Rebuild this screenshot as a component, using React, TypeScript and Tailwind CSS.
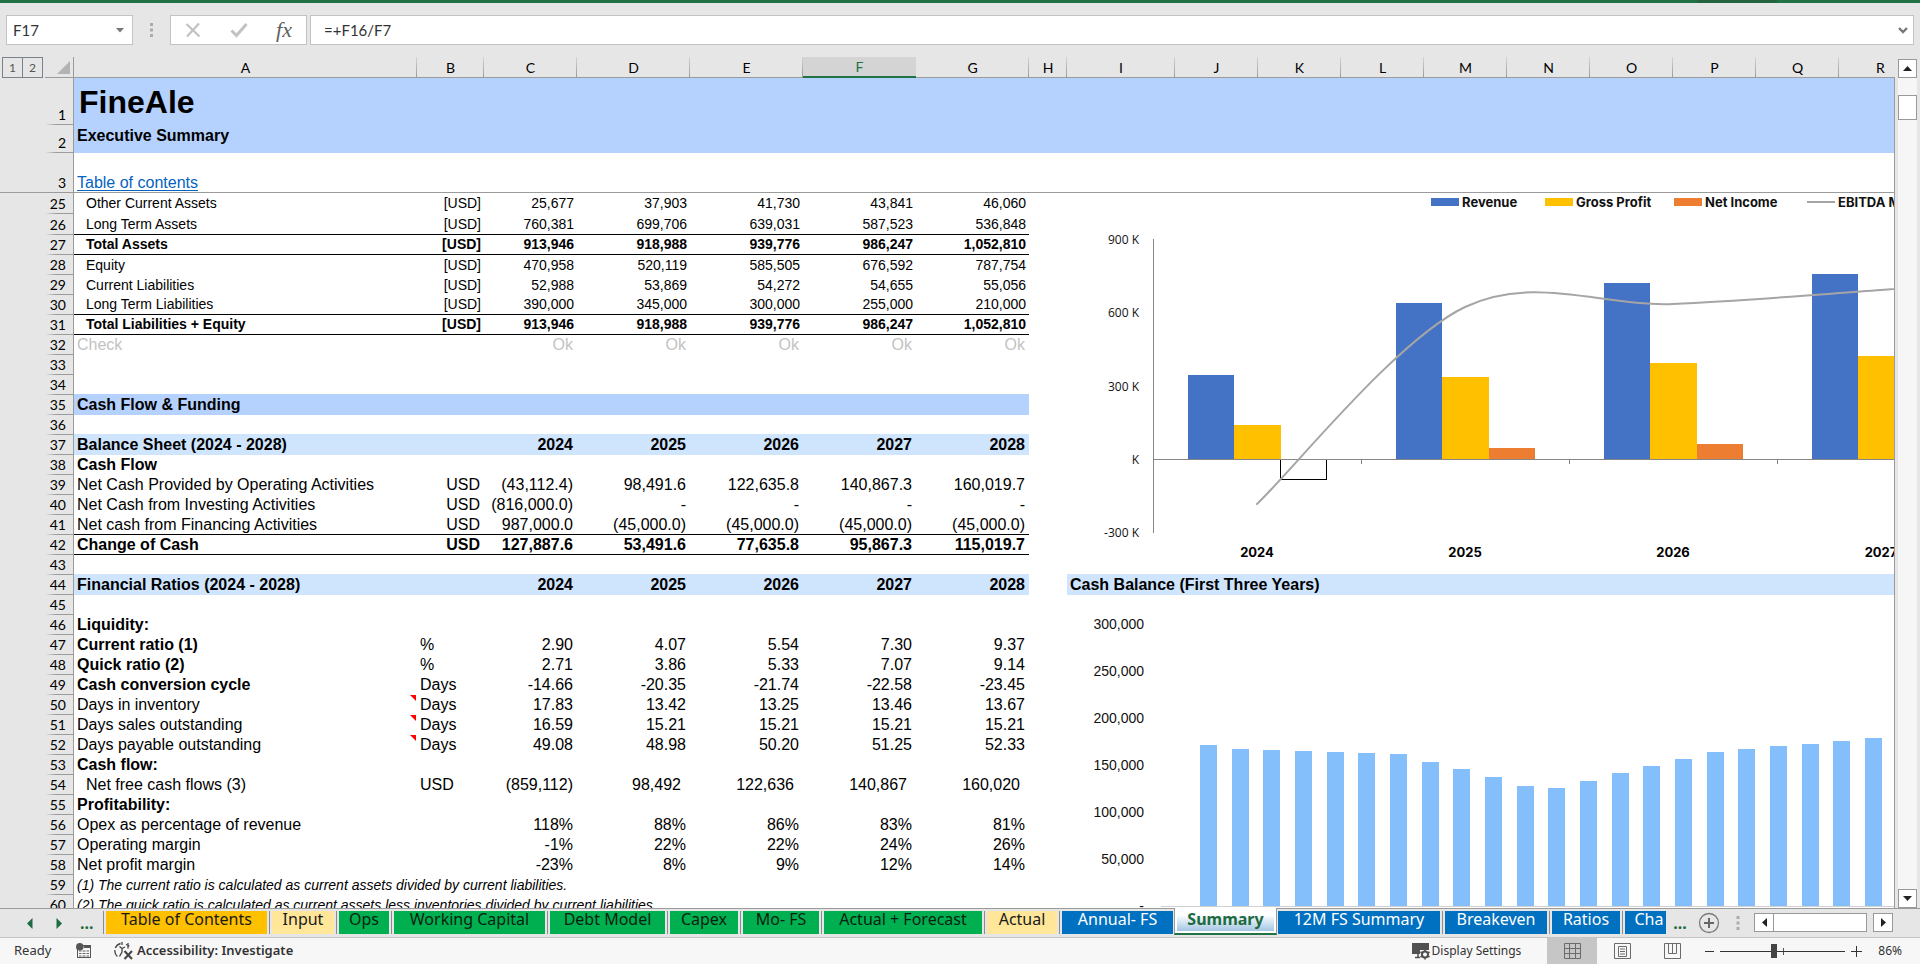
import React from "react";
import { clsx } from "clsx";

type Tone = "small" | "total" | "body" | "strong" | "muted" | "note";

interface Row {
  n: number;
  label?: string;
  unit?: string;
  unitLeft?: boolean;
  values?: string[];
  tone?: Tone;
  boldLabel?: boolean;
  indent?: boolean;
  line?: boolean;
  tall?: boolean;
  band?: "blue" | "light";
  note?: boolean;
  side?: string;
  accounting?: boolean;
}

const YEARS = ["2024", "2025", "2026", "2027", "2028"];

const ROWS: Row[] = [
  { n: 25, label: "Other Current Assets", unit: "[USD]", tone: "small", indent: true, tall: true, values: ["25,677", "37,903", "41,730", "43,841", "46,060"] },
  { n: 26, label: "Long Term Assets", unit: "[USD]", tone: "small", indent: true, tall: true, line: true, values: ["760,381", "699,706", "639,031", "587,523", "536,848"] },
  { n: 27, label: "Total Assets", unit: "[USD]", tone: "total", indent: true, line: true, values: ["913,946", "918,988", "939,776", "986,247", "1,052,810"] },
  { n: 28, label: "Equity", unit: "[USD]", tone: "small", indent: true, values: ["470,958", "520,119", "585,505", "676,592", "787,754"] },
  { n: 29, label: "Current Liabilities", unit: "[USD]", tone: "small", indent: true, values: ["52,988", "53,869", "54,272", "54,655", "55,056"] },
  { n: 30, label: "Long Term Liabilities", unit: "[USD]", tone: "small", indent: true, line: true, values: ["390,000", "345,000", "300,000", "255,000", "210,000"] },
  { n: 31, label: "Total Liabilities + Equity", unit: "[USD]", tone: "total", indent: true, line: true, values: ["913,946", "918,988", "939,776", "986,247", "1,052,810"] },
  { n: 32, label: "Check", tone: "muted", values: ["Ok", "Ok", "Ok", "Ok", "Ok"] },
  { n: 33 },
  { n: 34 },
  { n: 35, label: "Cash Flow & Funding", tone: "strong", band: "blue" },
  { n: 36 },
  { n: 37, label: "Balance Sheet (2024 - 2028)", tone: "strong", band: "light", values: YEARS },
  { n: 38, label: "Cash Flow", tone: "strong" },
  { n: 39, label: "Net Cash Provided by Operating Activities", unit: "USD", values: ["(43,112.4)", "98,491.6", "122,635.8", "140,867.3", "160,019.7"] },
  { n: 40, label: "Net Cash from Investing Activities", unit: "USD", values: ["(816,000.0)", "-", "-", "-", "-"] },
  { n: 41, label: "Net cash from Financing Activities", unit: "USD", line: true, values: ["987,000.0", "(45,000.0)", "(45,000.0)", "(45,000.0)", "(45,000.0)"] },
  { n: 42, label: "Change of Cash", unit: "USD", tone: "strong", line: true, values: ["127,887.6", "53,491.6", "77,635.8", "95,867.3", "115,019.7"] },
  { n: 43 },
  { n: 44, label: "Financial Ratios (2024 - 2028)", tone: "strong", band: "light", values: YEARS, side: "Cash Balance (First Three Years)" },
  { n: 45 },
  { n: 46, label: "Liquidity:", tone: "strong" },
  { n: 47, label: "Current ratio (1)", boldLabel: true, unit: "%", unitLeft: true, values: ["2.90", "4.07", "5.54", "7.30", "9.37"] },
  { n: 48, label: "Quick ratio (2)", boldLabel: true, unit: "%", unitLeft: true, values: ["2.71", "3.86", "5.33", "7.07", "9.14"] },
  { n: 49, label: "Cash conversion cycle", boldLabel: true, unit: "Days", unitLeft: true, values: ["-14.66", "-20.35", "-21.74", "-22.58", "-23.45"] },
  { n: 50, label: "Days in inventory", unit: "Days", unitLeft: true, note: true, values: ["17.83", "13.42", "13.25", "13.46", "13.67"] },
  { n: 51, label: "Days sales outstanding", unit: "Days", unitLeft: true, note: true, values: ["16.59", "15.21", "15.21", "15.21", "15.21"] },
  { n: 52, label: "Days payable outstanding", unit: "Days", unitLeft: true, note: true, values: ["49.08", "48.98", "50.20", "51.25", "52.33"] },
  { n: 53, label: "Cash flow:", tone: "strong" },
  { n: 54, label: "Net free cash flows (3)", indent: true, unit: "USD", unitLeft: true, accounting: true, values: ["(859,112)", "98,492", "122,636", "140,867", "160,020"] },
  { n: 55, label: "Profitability:", tone: "strong" },
  { n: 56, label: "Opex as percentage of revenue", values: ["118%", "88%", "86%", "83%", "81%"] },
  { n: 57, label: "Operating margin", values: ["-1%", "22%", "22%", "24%", "26%"] },
  { n: 58, label: "Net profit margin", values: ["-23%", "8%", "9%", "12%", "14%"] },
  { n: 59, label: "(1) The current ratio is calculated as current assets divided by current liabilities.", tone: "note" },
  { n: 60, label: "(2) The quick ratio is calculated as current assets less inventories divided by current liabilities.", tone: "note" },
];

const COLUMNS = "ABCDEFGHIJKLMNOPQR".split("");

const TONES: Record<Tone, string> = {
  small: "text-[14px]",
  total: "text-[14px] font-bold",
  body: "text-[16px]",
  strong: "text-[16px] font-bold",
  muted: "text-[16px] text-[#c3c3c3]",
  note: "text-[14px] italic",
};

const BANDS = {
  blue: "bg-[#b5d2ff] shadow-[0_-1px_0_#b5d2ff]",
  light: "bg-[#cfe5fe] shadow-[0_-1px_0_#cfe5fe]",
};

function RowHead({ n, freeze }: { n: number; freeze?: boolean }) {
  return (
    <>
      <td className={clsx("bg-[#e6e6e6]", freeze && "border-b border-[#9b9b9b]")} />
      <th
        scope="row"
        className={clsx(
          "border-r border-[#9b9b9b] bg-[#e6e6e6] pr-[7px] text-right align-bottom font-['Lato',sans-serif] text-[14px] leading-[19px] font-normal",
          freeze
            ? "border-b"
            : "bg-[linear-gradient(to_right,#e6e6e6,#9b9b9b_40%)] bg-[length:100%_1px] bg-bottom bg-no-repeat pb-px",
        )}
      >
        {n}
      </th>
    </>
  );
}

function DataRow({ row }: { row: Row }) {
  const tone = row.tone ?? "body";
  const compact = tone === "small" || tone === "total";
  const cell = clsx(
    TONES[tone],
    "align-bottom leading-[19px] whitespace-nowrap",
    row.line && "border-b border-black",
    !row.line && tone !== "note" && (!compact || row.tall) && "pb-px",
    row.band && BANDS[row.band],
  );
  const right = compact ? "pr-[3px] text-right" : "pr-[4px] text-right";
  return (
    <tr className={row.tall ? "h-[21px]" : "h-5"}>
      <RowHead n={row.n} />
      <td
        className={clsx(cell, "relative", row.indent ? "pl-[12px]" : "pl-[3px]", row.boldLabel && "font-bold")}
      >
        {row.label}
        {row.note && (
          <svg className="absolute top-0 right-px h-[6px] w-[6px]" viewBox="0 0 6 6" aria-hidden="true">
            <path d="M0 0H6V6Z" fill="#ff0000" />
          </svg>
        )}
      </td>
      <td className={clsx(cell, row.unitLeft ? "pl-[3px]" : right)}>{row.unit}</td>
      {YEARS.map((year, i) => (
        <td key={year} className={clsx(cell, row.accounting && i > 0 ? "pr-[9px] text-right" : right)}>
          {row.values?.[i]}
        </td>
      ))}
      <td />
      {row.side ? (
        <td colSpan={10} className={clsx(cell, "pl-[3px]")}>
          {row.side}
        </td>
      ) : (
        <td colSpan={10} />
      )}
    </tr>
  );
}

function Sheet() {
  return (
    <table className="w-full min-w-[1922px] table-fixed border-separate border-spacing-0 font-['Liberation_Sans',Arial,sans-serif] text-black">
      <colgroup>
        <col className="w-[45px]" />
        <col className="w-[29px]" />
        <col className="w-[343px]" />
        <col className="w-[67px]" />
        <col className="w-[93px]" />
        <col className="w-[113px]" />
        <col className="w-[113px]" />
        <col className="w-[113px]" />
        <col className="w-[113px]" />
        <col className="w-[38px]" />
        <col className="w-[108px]" />
        <col className="w-[83px]" />
        <col className="w-[83px]" />
        <col className="w-[83px]" />
        <col className="w-[83px]" />
        <col className="w-[83px]" />
        <col className="w-[83px]" />
        <col className="w-[83px]" />
        <col className="w-[83px]" />
        <col />
      </colgroup>
      <thead>
        <tr className="h-[21px] bg-[#e6e6e6]">
          <td className="p-0 align-top">
            <div className="ml-[2px] flex">
              {["1", "2"].map((level) => (
                <button
                  key={level}
                  type="button"
                  aria-label={`Outline level ${level}`}
                  className="-mr-px h-[21px] w-[21px] border border-[#7c828b] font-['Lato',sans-serif] text-[12px] leading-[19px] text-[#555]"
                >
                  {level}
                </button>
              ))}
            </div>
          </td>
          <td className="border-r border-b border-[#9b9b9b] p-0 align-top">
            <svg className="mt-1 ml-3 h-[13px] w-[13px]" viewBox="0 0 13 13" aria-hidden="true">
              <path d="M13 0V13H0Z" fill="#b3b3b3" />
            </svg>
          </td>
          {COLUMNS.map((c) => (
            <th
              key={c}
              scope="col"
              className={clsx(
                "p-0 font-['Lato',sans-serif] text-[14px] leading-[19px] font-normal",
                c === "F"
                  ? "border-b-2 border-[#217346] bg-[#d4d4d4] text-[#217346]"
                  : "border-b border-[#9b9b9b] bg-[linear-gradient(to_bottom,#d4d4d4,#9b9b9b)] bg-[length:1px_100%] bg-right bg-no-repeat",
              )}
            >
              {c}
            </th>
          ))}
        </tr>
      </thead>
      <tbody>
        <tr className="h-[47px]">
          <RowHead n={1} />
          <td colSpan={18} className="bg-[#b5d2ff] pl-[5px] text-[32px] leading-9 font-bold">
            FineAle
          </td>
        </tr>
        <tr className="h-7">
          <RowHead n={2} />
          <td colSpan={18} className="bg-[#b5d2ff] pt-px pl-[3px] align-top text-[16px] leading-5 font-bold">
            Executive Summary
          </td>
        </tr>
        <tr className="h-10">
          <RowHead n={3} freeze />
          <td colSpan={18} className="border-b border-[#9b9b9b] pl-[3px] align-bottom text-[16px] leading-[19px]">
            <a href="#contents" className="text-[#0563c1] underline underline-offset-2">
              Table of contents
            </a>
          </td>
        </tr>
        {ROWS.map((row) => (
          <DataRow key={row.n} row={row} />
        ))}
      </tbody>
    </table>
  );
}

const PERFORMANCE = [
  { year: "2024", revenue: 346, gross: 142, net: -80 },
  { year: "2025", revenue: 643, gross: 340, net: 50 },
  { year: "2026", revenue: 725, gross: 397, net: 66 },
  { year: "2027", revenue: 762, gross: 426, net: 80 },
];

const LEGEND = [
  { name: "Revenue", x: 362, color: "#4472c4" },
  { name: "Gross Profit", x: 476, color: "#ffc000" },
  { name: "Net Income", x: 605, color: "#ed7d31" },
];

function PerformanceChart() {
  const zero = 267;
  const perK = 73.3 / 300;
  return (
    <svg
      className="absolute top-[136px] left-[1069px] h-[380px] w-[900px]"
      viewBox="0 0 900 380"
      role="img"
      aria-label="Revenue, gross profit and net income by year"
    >
      <rect width="900" height="380" fill="#fff" />
      <g className="font-['Inter',sans-serif] text-[13px] font-bold" fill="#111">
        {LEGEND.map((l) => (
          <g key={l.name}>
            <rect x={l.x} y="5" width="28" height="8" fill={l.color} />
            <text x={l.x + 31} y="14">{l.name}</text>
          </g>
        ))}
        <path d="M738 9H766" stroke="#a5a5a5" strokeWidth="2" />
        <text x="769" y="14">EBITDA Margin</text>
      </g>
      <g className="font-['Open_Sans',sans-serif] text-[12px]" textAnchor="end" fill="#111">
        {["900 K", "600 K", "300 K", "K", "-300 K"].map((t, i) => (
          <text key={t} x="70" y={51 + Math.round(i * 73.3)}>{t}</text>
        ))}
      </g>
      {PERFORMANCE.map((d, i) => {
        const x = 119 + i * 208;
        return (
          <g key={d.year}>
            <g shapeRendering="crispEdges">
              <rect x={x} y={zero - d.revenue * perK} width="46" height={d.revenue * perK} fill="#4472c4" />
              <rect x={x + 46} y={zero - d.gross * perK} width="47" height={d.gross * perK} fill="#ffc000" />
              {d.net > 0 ? (
                <rect x={x + 93} y={zero - d.net * perK} width="46" height={d.net * perK} fill="#ed7d31" />
              ) : (
                <rect x={x + 92.5} y={zero - 0.5} width="46" height={-d.net * perK} fill="#fff" stroke="#000" />
              )}
            </g>
            <text x={x + 69} y="364" textAnchor="middle" className="font-['Inter',sans-serif] text-[13px] font-bold">
              {d.year}
            </text>
          </g>
        );
      })}
      <path
        d="M84.5 46V340M84.5 266.5H900M292.5 267V271M500.5 267V271M708.5 267V271"
        stroke="#868686"
        fill="none"
      />
      <path
        d="M188 311C223 278 327 147 396 114C465 81 535 114 604 111C673 108 743 102 812 97L900 90"
        stroke="#a5a5a5"
        strokeWidth="2"
        fill="none"
        strokeLinecap="round"
      />
    </svg>
  );
}

const BALANCE_HEIGHTS = [
  161, 157, 156, 155, 154, 153, 152, 144, 137, 129, 120, 118, 125, 133, 140, 147, 154, 157, 160, 162, 165, 168,
];

function CashChart() {
  return (
    <svg
      className="absolute top-[539px] left-[1069px] h-[330px] w-[900px]"
      viewBox="0 0 900 330"
      role="img"
      aria-label="Cash balance over the first three years"
    >
      <rect width="900" height="330" fill="#fff" />
      <g className="font-['Liberation_Sans',Arial,sans-serif] text-[14px]" textAnchor="end" fill="#111">
        {["300,000", "250,000", "200,000", "150,000", "100,000", "50,000", "-"].map((t, i) => (
          <text key={t} x="75" y={33 + i * 47}>{t}</text>
        ))}
      </g>
      <g shapeRendering="crispEdges" fill="#85bffb">
        {BALANCE_HEIGHTS.map((h, i) => (
          <rect key={i} x={Math.round(131 + i * 31.67)} y={310 - h} width="17" height={h} />
        ))}
      </g>
      <path d="M92 310.5H900" stroke="#d0d0d0" />
    </svg>
  );
}

function FormulaBar() {
  return (
    <div className="flex h-[54px] shrink-0 items-start bg-[#e6e6e6] pt-3 pr-[6px] pl-[6px] font-['Lato',sans-serif] text-[#333]">
      <div className="flex h-[30px] w-[127px] items-center border border-[#c3c3c3] bg-white">
        <input
          aria-label="Name box"
          defaultValue="F17"
          className="w-0 min-w-0 flex-1 bg-transparent pl-[6px] text-[15px] outline-none"
        />
        <button type="button" aria-label="Open name list" className="flex w-6 justify-center">
          <svg className="h-[5px] w-2" viewBox="0 0 8 5"><path d="M0 0H8L4 4.5Z" fill="#777" /></svg>
        </button>
      </div>
      <svg className="mx-4 mt-2 h-[14px] w-[5px]" viewBox="0 0 5 14" aria-hidden="true">
        <path d="M1 0H4V3H1ZM1 5.500H4V8.500H1ZM1 11H4V14H1Z" fill="#ababab" />
      </svg>
      <div className="flex h-[30px] w-[137px] items-center justify-between border border-[#c3c3c3] bg-white px-[14px]">
        <button type="button" aria-label="Cancel">
          <svg className="h-4 w-4" viewBox="0 0 16 16"><path d="M1.500 2L14.500 14.500M14 1.500L2 14.500" stroke="#c2c2c2" strokeWidth="2.200" fill="none" /></svg>
        </button>
        <button type="button" aria-label="Enter">
          <svg className="h-4 w-[18px]" viewBox="0 0 18 16"><path d="M1.500 8.500L6.500 13.500L16.500 2" stroke="#c2c2c2" strokeWidth="3" fill="none" /></svg>
        </button>
        <button
          type="button"
          aria-label="Insert function"
          className="font-['Liberation_Serif',serif] text-[22px] leading-6 text-[#5f5f5f] italic"
        >
          fx
        </button>
      </div>
      <div className="ml-[3px] flex h-[30px] flex-1 items-center border border-[#c3c3c3] bg-white">
        <input
          aria-label="Formula"
          defaultValue="=+F16/F7"
          className="min-w-0 flex-1 bg-transparent pl-[13px] text-[15px] outline-none"
        />
        <button type="button" aria-label="Expand formula bar" className="flex w-5 justify-center">
          <svg className="h-[7px] w-[10px]" viewBox="0 0 10 7"><path d="M1 1L5 5L9 1" stroke="#777" strokeWidth="2.400" fill="none" /></svg>
        </button>
      </div>
    </div>
  );
}

function VerticalScroll() {
  const box = "flex h-[19px] w-[19px] shrink-0 items-center justify-center border border-[#999] bg-white";
  return (
    <div className="flex w-[26px] shrink-0 gap-[3px] bg-[#e6e6e6]">
      <div className="mt-5 w-px bg-[#9b9b9b]" />
      <div className="mt-[2px] flex w-[19px] flex-col bg-[#f6f6f6]">
        <button type="button" aria-label="Scroll up" className={box}>
          <svg className="h-[5px] w-[9px]" viewBox="0 0 9 5"><path d="M0 5L4.500 0L9 5Z" fill="#222" /></svg>
        </button>
        <div className="mt-[17px] h-[25px] border border-[#999] bg-white" />
        <button type="button" aria-label="Scroll down" className={clsx(box, "mt-auto")}>
          <svg className="h-[5px] w-[9px]" viewBox="0 0 9 5"><path d="M0 0L4.500 5L9 0Z" fill="#222" /></svg>
        </button>
      </div>
    </div>
  );
}

const TABS = [
  { name: "Table of Contents", look: "w-[161px] bg-[#ffc000] text-[#1a1a1a]" },
  { name: "Input", look: "w-[62px] bg-[#ffe699] text-[#1a1a1a]" },
  { name: "Ops", look: "w-[50px] bg-[#00b050] text-[#0b1f10]" },
  { name: "Working Capital", look: "w-[151px] bg-[#00b050] text-[#0b1f10]" },
  { name: "Debt Model", look: "w-[115px] bg-[#00b050] text-[#0b1f10]" },
  { name: "Capex", look: "w-[68px] bg-[#00b050] text-[#0b1f10]" },
  { name: "Mo- FS", look: "w-[76px] bg-[#00b050] text-[#0b1f10]" },
  { name: "Actual + Forecast", look: "w-[158px] bg-[#00b050] text-[#0b1f10]" },
  { name: "Actual", look: "w-[70px] bg-[#ffe699] text-[#1a1a1a]" },
  { name: "Annual- FS", look: "w-[111px] bg-[#0070c0] text-white" },
  { name: "Summary", look: "" },
  { name: "12M FS Summary", look: "w-[162px] bg-[#0070c0] text-white" },
  { name: "Breakeven", look: "w-[102px] bg-[#0070c0] text-white" },
  { name: "Ratios", look: "w-[68px] bg-[#0070c0] text-white" },
  { name: "Cha", look: "w-[41px] bg-[#0070c0] pl-[7px] text-white" },
];

function TabBar() {
  return (
    <div className="flex h-[30px] shrink-0 border-b border-[#c4c4c4] bg-[#e6e6e6] font-['Noto_Sans',sans-serif] text-[16px] shadow-[inset_0_1px_0_#9b9b9b]">
      <div className="flex w-[103px] shrink-0 items-center pt-px pl-[26px] text-[#1e6b41]">
        <button type="button" aria-label="Previous sheet" className="mr-[23px]">
          <svg className="h-[11px] w-[7px]" viewBox="0 0 7 11"><path d="M6.500 0V11L1 5.500Z" fill="#1e6b41" /></svg>
        </button>
        <button type="button" aria-label="Next sheet" className="mr-[17px]">
          <svg className="h-[11px] w-[7px]" viewBox="0 0 7 11"><path d="M.5 0V11L6 5.500Z" fill="#1e6b41" /></svg>
        </button>
        <button type="button" aria-label="More sheets to the left" className="leading-5 font-bold">...</button>
      </div>
      <div className="flex min-w-0 flex-1 overflow-hidden">
        {TABS.map((tab) =>
          tab.name === "Summary" ? (
            <button
              key={tab.name}
              type="button"
              className="mr-px -ml-px h-[27px] w-[103px] shrink-0 border-x border-b-2 border-x-[#9b9b9b] border-b-[#217346] bg-white px-[2px] pb-[2px] text-center font-bold text-[#1e6b41]"
            >
              <span className="block h-full bg-linear-to-b from-white from-30% to-[#a3c6e3] leading-[22px]">{tab.name}</span>
            </button>
          ) : (
            <React.Fragment key={tab.name}>
              {tab.name !== "12M FS Summary" && <span className="mt-[3px] h-[23px] w-px shrink-0 bg-[#8c8c8c]" />}
              <button
                type="button"
                className={clsx(
                  "mt-[3px] h-[23px] shrink-0 pb-[6px] text-center leading-[17px] whitespace-nowrap",
                  tab.name === "12M FS Summary" ? "mr-[2px]" : tab.name === "Cha" ? "ml-[2px]" : "mx-[2px]",
                  tab.look,
                )}
              >
                {tab.name}
              </button>
            </React.Fragment>
          ),
        )}
      </div>
      <div className="flex w-[254px] shrink-0 items-center pl-[6px]">
        <button type="button" aria-label="More sheets to the right" className="w-4 leading-5 font-bold text-[#1e6b41]">...</button>
        <button type="button" aria-label="New sheet" className="ml-[10px]">
          <svg className="h-[22px] w-[22px]" viewBox="0 0 22 22">
            <circle cx="11" cy="11" r="9.500" stroke="#7a7a7a" strokeWidth="1.300" fill="none" />
            <path d="M11 6V16M6 11H16" stroke="#666" strokeWidth="2" />
          </svg>
        </button>
        <svg className="ml-[16px] h-[14px] w-[4px]" viewBox="0 0 4 14" aria-hidden="true">
          <path d="M.5 0H3.500V3H.5ZM.5 5.500H3.500V8.500H.5ZM.5 11H3.500V14H.5Z" fill="#ababab" />
        </svg>
        <div className="ml-[14px] flex">
          <button type="button" aria-label="Scroll left" className="flex h-[19px] w-[20px] items-center justify-center border border-[#999] bg-white">
            <svg className="h-[9px] w-[5px]" viewBox="0 0 5 9"><path d="M5 0V9L0 4.500Z" fill="#222" /></svg>
          </button>
          <div className="-ml-px h-[19px] w-[94px] border border-[#999] bg-white" />
          <button type="button" aria-label="Scroll right" className="ml-[6px] flex h-[19px] w-[20px] items-center justify-center border border-[#999] bg-white">
            <svg className="h-[9px] w-[5px]" viewBox="0 0 5 9"><path d="M0 0V9L5 4.500Z" fill="#222" /></svg>
          </button>
        </div>
      </div>
    </div>
  );
}

function StatusBar() {
  const view = "flex h-full w-[50px] items-center justify-center";
  return (
    <div className="mb-[2px] flex h-[26px] shrink-0 items-center bg-[#f7f7f7] font-['Noto_Sans',sans-serif] text-[12px] text-[#333]">
      <span className="w-[76px] pl-[14px] text-[13px]">Ready</span>
      <button type="button" aria-label="Record macro">
        <svg className="h-4 w-4" viewBox="0 0 16 16" fill="none">
          <rect x="1.500" y="2.500" width="13" height="12" stroke="#555" />
          <path d="M8 3H14V5H8Z" fill="#555" />
          <path d="M3 8H5.500M6.500 8H9.500M10.500 8H13M3 10.500H5.500M6.500 10.500H9.500M10.500 10.500H13M3 13H5.500M6.500 13H9.500M10.500 13H13" stroke="#666" />
          <circle cx="3.800" cy="3.800" r="3.800" fill="#555" />
        </svg>
      </button>
      <button type="button" className="ml-[22px] flex items-center gap-[3px] text-[13px] font-semibold">
        <svg className="h-[18px] w-[20px]" viewBox="0 0 20 18" fill="none" stroke="#444" strokeWidth="1.300">
          <path d="M6.500 1.500A7.500 7.500 0 0 0 5 15.500" strokeDasharray="7 2" />
          <path d="M8 0V3M5.500 4.500L8 6.500L11 5M8 6.500V10L5.500 14.500M12 2.500L15.500 4M14 1V6.500" />
          <path d="M10.500 9L18 17M18 9L10.500 17" strokeWidth="2" />
        </svg>
        Accessibility: Investigate
      </button>
      <button type="button" className="ml-auto flex items-center">
        <svg className="mr-px h-[18px] w-[20px]" viewBox="0 0 20 18" fill="none">
          <path d="M1 1H18V8H9V12H1Z" fill="#505050" />
          <path d="M4 15.500H9M7 12V15" stroke="#505050" strokeWidth="1.500" />
          <circle cx="14" cy="12.500" r="3" stroke="#505050" strokeWidth="2" />
          <path d="M14 7.500V9M14 16V17.500M9.500 10L11 11M17 14L18.500 15M9.500 15L11 14M17 11L18.500 10" stroke="#505050" strokeWidth="1.600" />
        </svg>
        Display Settings
      </button>
      <div className="ml-[26px] flex h-full">
        <button type="button" aria-label="Normal view" className={clsx(view, "bg-[#c6c6c6]")}>
          <svg className="h-4 w-[17px]" viewBox="0 0 17 16"><path d="M.5.5H16.500V15.500H.5ZM.5 5.500H16.500M.5 10.500H16.500M5.500.5V15.500M11.500.5V15.500" stroke="#6b6b6b" fill="none" /></svg>
        </button>
        <button type="button" aria-label="Page layout view" className={view}>
          <svg className="h-4 w-[17px]" viewBox="0 0 17 16"><path d="M.5.5H16.500V15.500H.5ZM4.500 3.500H12.500V13.500H4.500ZM6 6H11M6 8.500H11M6 11H11" stroke="#6b6b6b" fill="none" /></svg>
        </button>
        <button type="button" aria-label="Page break preview" className={view}>
          <svg className="h-4 w-[17px]" viewBox="0 0 17 16"><path d="M.5.5H16.500V15.500H.5ZM4.500.5V10.500H12.500V.5M8.500.5V10.500" stroke="#6b6b6b" fill="none" /></svg>
        </button>
      </div>
      <button type="button" aria-label="Zoom out" className="ml-[8px]">
        <svg className="h-[11px] w-[9px]" viewBox="0 0 9 11"><path d="M0 5.500H9" stroke="#333" /></svg>
      </button>
      <div className="relative mx-[6px] flex h-full items-center">
        <span className="absolute left-[63px] h-[7px] w-px bg-[#555]" />
        <input
          type="range"
          aria-label="Zoom"
          min={0}
          max={100}
          defaultValue={43}
          className="relative h-px w-[125px] appearance-none bg-[#333] [&::-webkit-slider-thumb]:h-[14px] [&::-webkit-slider-thumb]:w-[6px] [&::-webkit-slider-thumb]:appearance-none [&::-webkit-slider-thumb]:bg-[#444]"
        />
      </div>
      <button type="button" aria-label="Zoom in">
        <svg className="h-[11px] w-[11px]" viewBox="0 0 11 11"><path d="M0 5.500H11M5.500 0V11" stroke="#333" /></svg>
      </button>
      <span className="mr-[18px] ml-[16px]">86%</span>
    </div>
  );
}

export default function App() {
  return (
    <div className="flex h-screen flex-col overflow-hidden bg-white">
      <div className="flex h-[3px] shrink-0 justify-end bg-[#217346] pr-[143px]">
        <div className="w-[80px] rounded-b-sm bg-[#25633f]" />
      </div>
      <FormulaBar />
      <main className="flex min-h-0 flex-1">
        <div className="relative min-w-0 flex-1 overflow-hidden">
          <Sheet />
          <PerformanceChart />
          <CashChart />
        </div>
        <VerticalScroll />
      </main>
      <TabBar />
      <StatusBar />
    </div>
  );
}
